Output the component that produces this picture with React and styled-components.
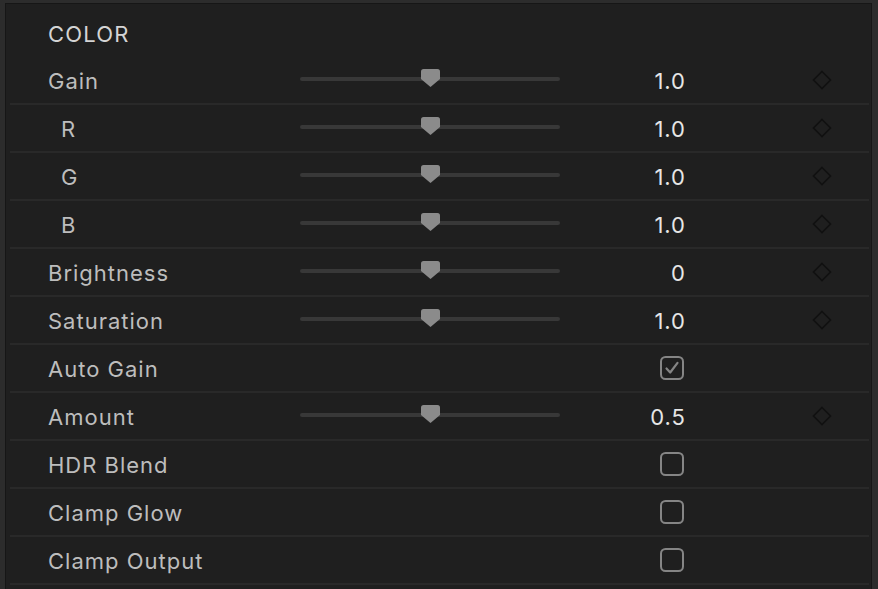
import styled, { createGlobalStyle } from "styled-components";

const GlobalStyle = createGlobalStyle`
  html, body {
    margin: 0;
    padding: 0;
    background: #2c2c2c;
    font-family: Inter, "Noto Sans", "Liberation Sans", sans-serif;
  }
`;

const rows = [
  { label: "Gain", kind: "slider", value: "1.0" },
  { label: "R", kind: "slider", value: "1.0", sub: true },
  { label: "G", kind: "slider", value: "1.0", sub: true },
  { label: "B", kind: "slider", value: "1.0", sub: true },
  { label: "Brightness", kind: "slider", value: "0" },
  { label: "Saturation", kind: "slider", value: "1.0" },
  { label: "Auto Gain", kind: "check", checked: true },
  { label: "Amount", kind: "slider", value: "0.5" },
  { label: "HDR Blend", kind: "check" },
  { label: "Clamp Glow", kind: "check" },
  { label: "Clamp Output", kind: "check" },
];

const Thumb = () => (
  <svg width="19" height="18" viewBox="0 0 19 18">
    <path d="M2.5 0 H16.5 Q19 0 19 2.5 V10 L9.5 18 L0 10 V2.5 Q0 0 2.5 0 Z" fill="#8b8b8b" />
  </svg>
);

const Diamond = () => (
  <svg width="20" height="20" viewBox="0 0 20 20">
    <polygon points="10,1.5 18.5,10 10,18.5 1.5,10" fill="none" stroke="#111111" strokeWidth="1.6" />
  </svg>
);

const Check = ({ checked }) => (
  <svg width="24" height="24" viewBox="0 0 24 24">
    <rect x="1" y="1" width="22" height="22" rx="4.5" fill="none" stroke="#858585" strokeWidth="2" />
    {checked && (
      <path d="M6.5 12.5 L10.2 16.5 L17.5 6.8" fill="none" stroke="#858585" strokeWidth="2.2" strokeLinecap="round" strokeLinejoin="round" />
    )}
  </svg>
);

const App = () => {
  return (
    <>
      <GlobalStyle />
      <Frame>
        <Panel>
          <Header>COLOR</Header>
          {rows.map((r) => (
            <Row key={r.label}>
              <Label $sub={r.sub}>{r.label}</Label>
              <SliderCell>
                {r.kind === "slider" && (
                  <Track>
                    <ThumbWrap>
                      <Thumb />
                    </ThumbWrap>
                  </Track>
                )}
              </SliderCell>
              <ValueCell>
                {r.kind === "slider" ? <Value>{r.value}</Value> : <Check checked={r.checked} />}
              </ValueCell>
              <KeyCell>{r.kind === "slider" && <Diamond />}</KeyCell>
            </Row>
          ))}
        </Panel>
      </Frame>
    </>
  );
};

export default App;

const Frame = styled.div`
  width: 878px;
  height: 589px;
  padding: 3px 6px 0 5px;
  box-sizing: border-box;
  overflow: hidden;
`;

const Panel = styled.div`
  height: 100%;
  box-sizing: border-box;
  background: #1f1f1f;
  border: 1px solid #161616;
  border-bottom: none;
  padding: 0 2px 0 4px;
`;

const Header = styled.div`
  height: 53px;
  box-sizing: border-box;
  padding: 6px 0 0 38px;
  display: flex;
  align-items: center;
  font-size: 22px;
  color: #d4d4d4;
  letter-spacing: 1.2px;
`;

const Row = styled.div`
  height: 46px;
  border-bottom: 2px solid #292929;
  display: grid;
  grid-template-columns: 251px 260px 125px 1fr;
  align-items: center;
  padding-left: 39px;
`;

const Label = styled.div`
  font-size: 22px;
  color: #bdbdbd;
  padding-left: ${(p) => (p.$sub ? "13px" : "0")};
  padding-top: 2px;
  margin-left: -1px;
  letter-spacing: 1px;
`;

const SliderCell = styled.div`
  height: 100%;
  display: flex;
  align-items: center;
`;

const Track = styled.div`
  position: relative;
  width: 260px;
  height: 4px;
  margin-top: -2px;
  border-radius: 2px;
  background: #383838;
`;

const ThumbWrap = styled.div`
  position: absolute;
  left: 121px;
  top: -8px;
  display: flex;
`;

const ValueCell = styled.div`
  display: flex;
  justify-content: flex-end;
  align-items: center;
  padding-right: 1px;
`;

const Value = styled.span`
  font-size: 22px;
  color: #e6e6e6;
  letter-spacing: 1px;
  padding-top: 2px;
  margin-right: -2px;
`;

const KeyCell = styled.div`
  display: flex;
  align-items: center;
  padding-left: 127px;
`;
